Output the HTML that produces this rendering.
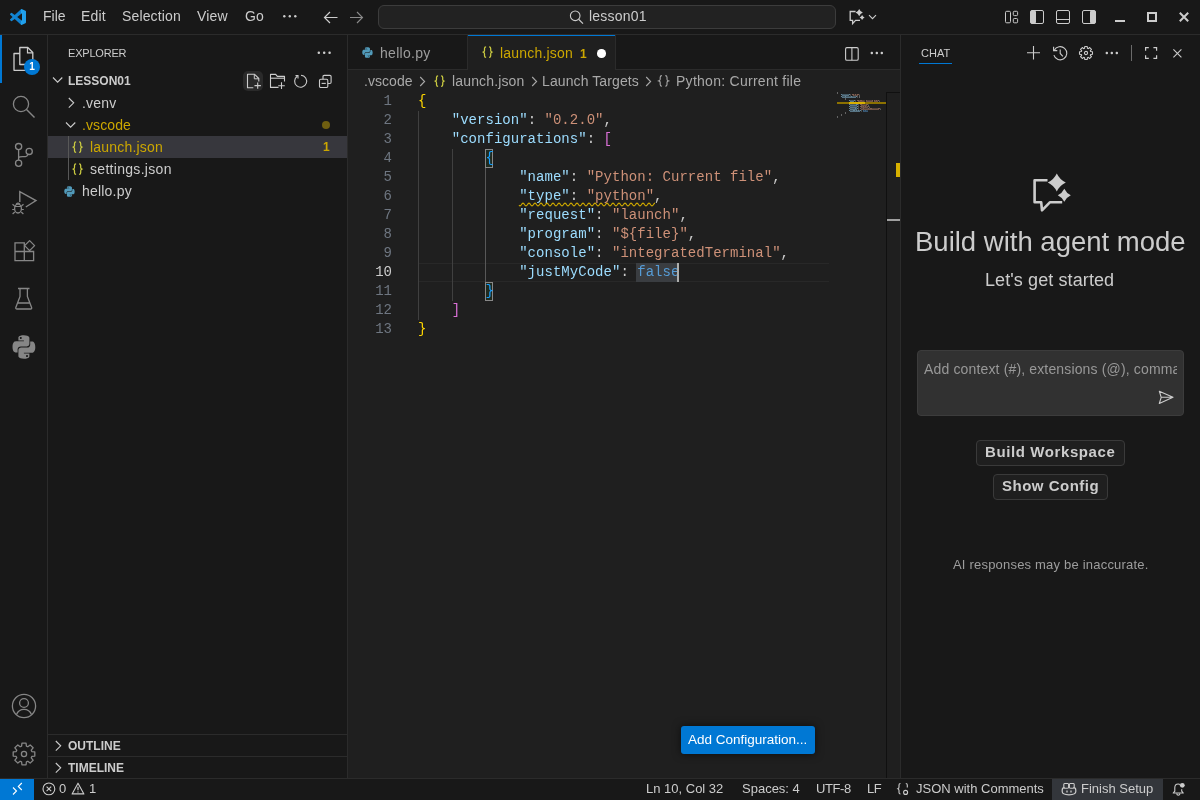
<!DOCTYPE html>
<html><head><meta charset="utf-8">
<style>
*{box-sizing:border-box;margin:0;padding:0}
html,body{width:1200px;height:800px;overflow:hidden;background:#181818;}
body{will-change:transform;font-family:"Liberation Sans",sans-serif;color:#cccccc;font-size:13px}
.a{position:absolute}
.t{position:absolute;white-space:nowrap;line-height:1}
svg{position:absolute;overflow:visible}
.mono{font-family:"Liberation Mono",monospace}
</style></head><body>
<!-- TITLE BAR -->
<div class="a" style="left:0;top:0;width:1200px;height:34px;background:#181818"></div>
<div class="a" style="left:0;top:34px;width:1200px;height:1px;background:#2b2b2b"></div>

<!-- logo -->
<svg style="left:10px;top:9px" width="16" height="16" viewBox="0 0 100 100"><defs><linearGradient id="lg" x1="0" x2="1" y1="0" y2="0"><stop offset="0" stop-color="#1589d6"/><stop offset="0.66" stop-color="#0d7fcf"/><stop offset="0.67" stop-color="#22a3ee"/><stop offset="1" stop-color="#1f9ce8"/></linearGradient></defs><path fill="url(#lg)" d="M96.46 10.8L75.86.87a6.23 6.23 0 0 0-7.1 1.2L29.35 38.04 12.19 25.01a4.160 4.160 0 0 0-5.32.24l-5.5 5a4.16 4.16 0 0 0 0 6.16L16.26 50 1.37 63.59a4.16 4.16 0 0 0 0 6.16l5.5 5a4.16 4.16 0 0 0 5.32.24l17.16-13.03 39.41 35.97a6.23 6.23 0 0 0 7.1 1.2l20.6-9.92a6.24 6.24 0 0 0 3.54-5.63V16.43a6.24 6.24 0 0 0-3.54-5.63zM75.01 72.7L45.110 50l29.9-22.7z"/></svg>
<div class="t" style="left:43px;top:9px;font-size:14px;letter-spacing:0px">File</div>
<div class="t" style="left:81px;top:9px;font-size:14px;letter-spacing:0.2px">Edit</div>
<div class="t" style="left:122px;top:9px;font-size:14px;letter-spacing:0.15px">Selection</div>
<div class="t" style="left:197px;top:9px;font-size:14px;letter-spacing:0.2px">View</div>
<div class="t" style="left:245px;top:9px;font-size:14px;letter-spacing:0px">Go</div>
<svg style="left:283px;top:15px" width="14" height="3"><circle cx="1.3" cy="1.3" r="1.2" fill="#ccc"/><circle cx="6.8" cy="1.3" r="1.2" fill="#ccc"/><circle cx="12.3" cy="1.3" r="1.2" fill="#ccc"/></svg>
<!-- nav arrows -->
<svg style="left:323px;top:11px" width="16" height="14" viewBox="0 0 16 14"><path d="M7 1L1.5 6.5L7 12M1.5 6.5H14.5" stroke="#cccccc" stroke-width="1.2" fill="none"/></svg>
<svg style="left:349px;top:11px" width="16" height="14" viewBox="0 0 16 14"><path d="M8 1L13.5 6.5L8 12M13.5 6.5H1" stroke="#8b8b8b" stroke-width="1.1" fill="none"/></svg>
<!-- search -->
<div class="a" style="left:378px;top:5px;width:458px;height:24px;background:#222222;border:1px solid #3c3c3c;border-radius:6px"></div>
<svg style="left:569px;top:10px" width="15" height="15" viewBox="0 0 15 15"><circle cx="6.2" cy="5.8" r="4.8" stroke="#cccccc" stroke-width="1.1" fill="none"/><path d="M9.6 9.3L14 13.6" stroke="#cccccc" stroke-width="1.2"/></svg>
<div class="t" style="left:589px;top:9px;font-size:14px;letter-spacing:0.2px">lesson01</div>
<!-- copilot -->
<svg style="left:849px;top:9px" width="17" height="16" viewBox="0 0 17 16"><path d="M6.6 2.5H1.2V11.4H3.6V14.6L6.6 11.4H11" stroke="#cccccc" stroke-width="1.3" fill="none" stroke-linejoin="miter"/><path d="M10.2 0.0Q11.2 2.6 13.799999999999999 3.6Q11.2 4.6 10.2 7.2Q9.2 4.6 6.6 3.6Q9.2 2.6 10.2 0.0Z" fill="#cccccc"/><path d="M13.1 6.1Q13.85 7.85 15.6 8.6Q13.85 9.35 13.1 11.1Q12.35 9.35 10.6 8.6Q12.35 7.85 13.1 6.1Z" fill="#cccccc"/></svg>
<svg style="left:868px;top:14px" width="9" height="6" viewBox="0 0 9 6"><path d="M1 1.2L4.5 4.7L8 1.2" stroke="#cccccc" stroke-width="1.1" fill="none"/></svg>
<!-- layout icons -->
<svg style="left:1004px;top:10px" width="15" height="14" viewBox="0 0 15 14"><rect x="1.5" y="1.3" width="5" height="11.5" rx="1.2" stroke="#cccccc" fill="none"/><rect x="9.3" y="1.3" width="4.3" height="4.3" rx="1" stroke="#cccccc" fill="none"/><rect x="9.3" y="8.5" width="4.3" height="4.3" rx="1" stroke="#cccccc" fill="none"/></svg>
<svg style="left:1030px;top:10px" width="14" height="14" viewBox="0 0 14 14"><rect x="0.5" y="0.5" width="13" height="13" rx="1.5" stroke="#cccccc" fill="none"/><rect x="0.5" y="0.5" width="5.5" height="13" rx="1.5" fill="#cccccc"/></svg>
<svg style="left:1056px;top:10px" width="14" height="14" viewBox="0 0 14 14"><rect x="0.5" y="0.5" width="13" height="13" rx="1.5" stroke="#cccccc" fill="none"/><path d="M0.5 9.5H13.5" stroke="#cccccc"/></svg>
<svg style="left:1082px;top:10px" width="14" height="14" viewBox="0 0 14 14"><rect x="0.5" y="0.5" width="13" height="13" rx="1.5" stroke="#cccccc" fill="none"/><rect x="8" y="0.5" width="5.5" height="13" rx="1.5" fill="#cccccc"/></svg>
<!-- window controls -->
<div class="a" style="left:1115px;top:20px;width:10px;height:2px;background:#cccccc"></div>
<div class="a" style="left:1147px;top:12px;width:10px;height:10px;border:2px solid #cccccc"></div>
<svg style="left:1179px;top:12px" width="10" height="10" viewBox="0 0 10 10"><path d="M0.8 0.8L9.2 9.2M9.2 0.8L0.8 9.2" stroke="#cccccc" stroke-width="2"/></svg>
<!-- ACTIVITY BAR -->
<div class="a" style="left:47px;top:35px;width:1px;height:743px;background:#2b2b2b"></div>

<div class="a" style="left:0;top:35px;width:2px;height:48px;background:#0078d4"></div>
<!-- explorer icon -->
<svg style="left:12px;top:46px" width="24" height="26" viewBox="0 0 24 26"><path d="M7.8 1.5H15.8L20.8 6.5V18.5H7.8Z" stroke="#cccccc" stroke-width="1.3" fill="none" stroke-linejoin="round"/><path d="M15.5 1.5V6.8H20.8" stroke="#cccccc" stroke-width="1.2" fill="none"/><path d="M7.8 7.5H2V24.3H15.5V18.5" stroke="#cccccc" stroke-width="1.3" fill="none" stroke-linejoin="round"/></svg>
<div class="a" style="left:24px;top:59px;width:16px;height:16px;border-radius:50%;background:#0078d4"></div>
<div class="t" style="left:24px;top:62px;width:16px;text-align:center;font-size:10px;font-weight:bold;color:#fff">1</div>
<!-- search -->
<svg style="left:10px;top:93px" width="28" height="28" viewBox="0 0 28 28"><circle cx="11" cy="11" r="7.6" stroke="#868686" stroke-width="1.3" fill="none"/><path d="M16.5 16.5L24.5 24.5" stroke="#868686" stroke-width="1.4"/></svg>
<!-- scm -->
<svg style="left:10px;top:140px" width="28" height="28" viewBox="0 0 28 28"><circle cx="8.6" cy="6.6" r="3.1" stroke="#868686" stroke-width="1.3" fill="none"/><circle cx="8.6" cy="23.2" r="3.1" stroke="#868686" stroke-width="1.3" fill="none"/><circle cx="19.2" cy="11.4" r="3.1" stroke="#868686" stroke-width="1.3" fill="none"/><path d="M8.6 9.7V20.1M8.6 17.6Q9.5 16.6 12.5 16.6H15.5Q17 16.6 18.2 14.3" stroke="#868686" stroke-width="1.3" fill="none"/></svg>
<!-- debug -->
<svg style="left:10px;top:188px" width="28" height="28" viewBox="0 0 28 28"><path d="M9.8 14V3.6L26 12.6L15.8 19" stroke="#868686" stroke-width="1.4" fill="none" stroke-linejoin="miter"/><ellipse cx="8" cy="20.5" rx="3.4" ry="4.5" stroke="#868686" stroke-width="1.3" fill="none"/><path d="M4.6 18.5H11.4M2.5 16.3L4.6 18M13.5 16.3L11.4 18M2.2 21.5H4.6M11.4 21.5H13.8M2.6 26L4.8 24M13.4 26L11.2 24M6.2 16.2Q8 14.2 9.8 16.2" stroke="#868686" stroke-width="1.2" fill="none"/></svg>
<!-- extensions -->
<svg style="left:10px;top:237px" width="28" height="28" viewBox="0 0 28 28"><path d="M5 5.8H14.3V23.6H5ZM5 14.5H23.6V23.6H14.3V14.5" stroke="#868686" stroke-width="1.3" fill="none"/><path d="M19.6 3.6L24.6 8.6L19.6 13.6L14.6 8.6Z" stroke="#868686" stroke-width="1.3" fill="none" stroke-linejoin="round"/></svg>
<!-- testing -->
<svg style="left:10px;top:285px" width="28" height="28" viewBox="0 0 28 28"><path d="M8 3.5H19.5M10 3.5V11.5L5.8 22.5Q5.5 24 7 24H20.6Q22 24 21.6 22.5L17.4 11.5V3.5M8 18H19.5" stroke="#868686" stroke-width="1.3" fill="none" stroke-linejoin="round"/></svg>
<!-- python -->
<svg style="left:12px;top:335px" width="24" height="24" viewBox="0 0 24 24"><path fill="#868686" d="M11.8 0.3C6 0.3 6.4 2.8 6.4 2.8V5.4H11.9V6.2H4.2S0.5 5.8 0.5 11.7C0.5 17.6 3.7 17.4 3.7 17.4H5.6V14.6S5.5 11.4 8.8 11.4H14.3S17.4 11.5 17.4 8.4V3.3S17.9 0.3 11.8 0.3ZM8.8 2C9.3 2 9.8 2.4 9.8 3C9.8 3.5 9.3 4 8.8 4C8.2 4 7.8 3.5 7.8 3C7.8 2.4 8.2 2 8.8 2Z"/><path fill="#868686" d="M12 23.7C17.8 23.7 17.4 21.2 17.4 21.2V18.6H11.9V17.8H19.6S23.3 18.2 23.3 12.3C23.3 6.4 20.1 6.6 20.1 6.6H18.2V9.4S18.3 12.6 15 12.6H9.5S6.4 12.5 6.4 15.6V20.7S5.9 23.7 12 23.7ZM15 22C14.5 22 14 21.6 14 21C14 20.5 14.5 20 15 20C15.6 20 16 20.5 16 21C16 21.6 15.6 22 15 22Z"/></svg>
<!-- account -->
<svg style="left:10px;top:692px" width="28" height="28" viewBox="0 0 28 28"><circle cx="14" cy="14" r="11.6" stroke="#868686" stroke-width="1.3" fill="none"/><circle cx="14" cy="11" r="4.4" stroke="#868686" stroke-width="1.3" fill="none"/><path d="M6.5 22.5Q8.5 17.4 14 17.4Q19.5 17.4 21.5 22.5" stroke="#868686" stroke-width="1.3" fill="none"/></svg>
<!-- gear -->
<svg style="left:10px;top:740px" width="28" height="28" viewBox="0 0 28 28"><path id="gear" d="M11.58 6.17 L11.92 3.20 L16.08 3.20 L16.42 6.17 L17.83 6.75 L20.17 4.89 L23.11 7.83 L21.25 10.17 L21.83 11.58 L24.80 11.92 L24.80 16.08 L21.83 16.42 L21.25 17.83 L23.11 20.17 L20.17 23.11 L17.83 21.25 L16.42 21.83 L16.08 24.80 L11.92 24.80 L11.58 21.83 L10.17 21.25 L7.83 23.11 L4.89 20.17 L6.75 17.83 L6.17 16.42 L3.20 16.08 L3.20 11.92 L6.17 11.58 L6.75 10.17 L4.89 7.83 L7.83 4.89 L10.17 6.75Z" stroke="#868686" stroke-width="1.3" fill="none" stroke-linejoin="round"/><circle cx="14" cy="14" r="2.6" stroke="#868686" stroke-width="1.3" fill="none"/></svg>
<!-- SIDEBAR -->
<div class="a" style="left:347px;top:35px;width:1px;height:743px;background:#2b2b2b"></div>

<div class="t" style="left:68px;top:48px;font-size:11px;letter-spacing:-0.2px;color:#cccccc">EXPLORER</div>
<svg style="left:317px;top:51px" width="14" height="4"><rect x="0.6" y="0.6" width="2.4" height="2.4" rx="1" fill="#cccccc"/><rect x="6" y="0.6" width="2.4" height="2.4" rx="1" fill="#cccccc"/><rect x="11.4" y="0.6" width="2.4" height="2.4" rx="1" fill="#cccccc"/></svg>
<!-- LESSON01 row -->
<svg style="left:52px;top:76px" width="12" height="8" viewBox="0 0 12 8"><path d="M1 1.5L5.6 6.2L10.3 1.5" stroke="#cccccc" stroke-width="1.1" fill="none"/></svg>
<div class="t" style="left:68px;top:75px;font-size:12px;font-weight:bold;color:#cccccc">LESSON01</div>
<div class="a" style="left:243px;top:71px;width:20px;height:20px;border-radius:5px;background:#2a2a2a"></div>
<svg style="left:245px;top:72px" width="18" height="18" viewBox="0 0 18 18"><path d="M8.3 15.8H2.5V2.3H9.6L13.8 6.5V9.5" stroke="#cccccc" stroke-width="1.1" fill="none" stroke-linejoin="round"/><path d="M9.3 2.3V6.8H13.8" stroke="#cccccc" stroke-width="1" fill="none"/><path d="M12.7 10.5V16.8M9.5 13.6H15.9" stroke="#cccccc" stroke-width="1.1"/></svg>
<svg style="left:269px;top:72px" width="18" height="18" viewBox="0 0 18 18"><path d="M9.5 15.4H1.5V2.4H6.7L8.3 4.4H15.5V9.5" stroke="#cccccc" stroke-width="1.1" fill="none" stroke-linejoin="round"/><path d="M1.5 6.2H15.5" stroke="#cccccc" stroke-width="1.1"/><path d="M12.5 10.3V17M9.2 13.7H15.8" stroke="#cccccc" stroke-width="1.1"/></svg>
<svg style="left:293px;top:73px" width="16" height="16" viewBox="0 0 16 16"><path d="M4.3 3.2A6 6 0 1 0 8 2.2" stroke="#cccccc" stroke-width="1.1" fill="none"/><path d="M2.5 2.6H5V5.4" stroke="#cccccc" stroke-width="1.1" fill="none"/></svg>
<svg style="left:318px;top:74px" width="15" height="15" viewBox="0 0 15 15"><rect x="1.5" y="5.2" width="8.3" height="8.3" rx="1.2" stroke="#cccccc" stroke-width="1.1" fill="none"/><path d="M5 5.2V2.6Q5 1.4 6.2 1.4H11.9Q13.1 1.4 13.1 2.6V8.3Q13.1 9.5 11.9 9.5H9.8" stroke="#cccccc" stroke-width="1.1" fill="none"/><path d="M3.6 9.4H7.8" stroke="#cccccc" stroke-width="1.1"/></svg>
<!-- .venv -->
<svg style="left:67px;top:97px" width="9" height="12" viewBox="0 0 9 12"><path d="M1.8 1L6.7 5.8L1.8 10.6" stroke="#cccccc" stroke-width="1.1" fill="none"/></svg>
<div class="t" style="left:82px;top:96px;font-size:14px;color:#cccccc;letter-spacing:0.2px">.venv</div>
<!-- .vscode -->
<svg style="left:65px;top:121px" width="12" height="9" viewBox="0 0 12 9"><path d="M1 1.5L5.6 6.2L10.3 1.5" stroke="#cccccc" stroke-width="1.1" fill="none"/></svg>
<div class="t" style="left:82px;top:118px;font-size:14px;color:#cca700;letter-spacing:0.1px">.vscode</div>
<div class="a" style="left:322px;top:121px;width:8px;height:8px;border-radius:50%;background:#6f5e10"></div>
<!-- launch.json selected -->
<div class="a" style="left:48px;top:136px;width:299px;height:22px;background:#37373d"></div>
<div class="a" style="left:68px;top:136px;width:1px;height:44px;background:#585858"></div>
<svg style="left:72px;top:141px" width="12" height="12" viewBox="0 0 12 12"><path d="M4.1 0.9Q2.5 0.9 2.5 2.5V4.5Q2.5 5.6 1.4 6.1Q2.5 6.6 2.5 7.7V9.7Q2.5 11.3 4.1 11.3M7.1 0.9Q8.7 0.9 8.7 2.5V4.5Q8.7 5.6 9.8 6.1Q8.7 6.6 8.7 7.7V9.7Q8.7 11.3 7.1 11.3" stroke="#cbcb41" stroke-width="1.25" fill="none"/></svg>
<div class="t" style="left:90px;top:140px;font-size:14px;color:#cca700;letter-spacing:0.2px">launch.json</div>
<div class="t" style="left:323px;top:141px;font-size:12px;font-weight:bold;color:#cca700">1</div>
<!-- settings.json -->
<svg style="left:72px;top:163px" width="12" height="12" viewBox="0 0 12 12"><path d="M4.1 0.9Q2.5 0.9 2.5 2.5V4.5Q2.5 5.6 1.4 6.1Q2.5 6.6 2.5 7.7V9.7Q2.5 11.3 4.1 11.3M7.1 0.9Q8.7 0.9 8.7 2.5V4.5Q8.7 5.6 9.8 6.1Q8.7 6.6 8.7 7.7V9.7Q8.7 11.3 7.1 11.3" stroke="#cbcb41" stroke-width="1.25" fill="none"/></svg>
<div class="t" style="left:90px;top:162px;font-size:14px;color:#cccccc;letter-spacing:0.3px">settings.json</div>
<!-- hello.py -->
<svg style="left:64px;top:186px" width="11" height="11" viewBox="0 0 24 24"><path fill="#519aba" d="M11.8 0.3C6 0.3 6.4 2.8 6.4 2.8V5.4H11.9V6.2H4.2S0.5 5.8 0.5 11.7C0.5 17.6 3.7 17.4 3.7 17.4H5.6V14.6S5.5 11.4 8.8 11.4H14.3S17.4 11.5 17.4 8.4V3.3S17.9 0.3 11.8 0.3ZM8.8 2C9.3 2 9.8 2.4 9.8 3C9.8 3.5 9.3 4 8.8 4C8.2 4 7.8 3.5 7.8 3C7.8 2.4 8.2 2 8.8 2Z"/><path fill="#519aba" d="M12 23.7C17.8 23.7 17.4 21.2 17.4 21.2V18.6H11.9V17.8H19.6S23.3 18.2 23.3 12.3C23.3 6.4 20.1 6.6 20.1 6.6H18.2V9.4S18.3 12.6 15 12.6H9.5S6.4 12.5 6.4 15.6V20.7S5.9 23.7 12 23.7ZM15 22C14.5 22 14 21.6 14 21C14 20.5 14.5 20 15 20C15.6 20 16 20.5 16 21C16 21.6 15.6 22 15 22Z"/></svg>
<div class="t" style="left:82px;top:184px;font-size:14px;color:#cccccc;letter-spacing:0.2px">hello.py</div>
<!-- OUTLINE / TIMELINE -->
<div class="a" style="left:48px;top:734px;width:299px;height:1px;background:#2b2b2b"></div>
<svg style="left:54px;top:740px" width="9" height="12" viewBox="0 0 9 12"><path d="M1.8 1L6.7 5.8L1.8 10.6" stroke="#cccccc" stroke-width="1.1" fill="none"/></svg>
<div class="t" style="left:68px;top:740px;font-size:12px;font-weight:bold;color:#cccccc">OUTLINE</div>
<div class="a" style="left:48px;top:756px;width:299px;height:1px;background:#2b2b2b"></div>
<svg style="left:54px;top:762px" width="9" height="12" viewBox="0 0 9 12"><path d="M1.8 1L6.7 5.8L1.8 10.6" stroke="#cccccc" stroke-width="1.1" fill="none"/></svg>
<div class="t" style="left:68px;top:762px;font-size:12px;font-weight:bold;color:#cccccc">TIMELINE</div>
<!-- EDITOR -->
<div class="a" style="left:348px;top:35px;width:552px;height:743px;background:#1f1f1f"></div>

<!-- tabs -->
<div class="a" style="left:348px;top:35px;width:552px;height:35px;background:#181818"></div>
<div class="a" style="left:348px;top:69px;width:552px;height:1px;background:#2b2b2b"></div>
<div class="a" style="left:467px;top:35px;width:1px;height:34px;background:#2b2b2b"></div>
<svg style="left:362px;top:47px" width="11" height="11" viewBox="0 0 24 24"><path fill="#519aba" d="M11.8 0.3C6 0.3 6.4 2.8 6.4 2.8V5.4H11.9V6.2H4.2S0.5 5.8 0.5 11.7C0.5 17.6 3.7 17.4 3.7 17.4H5.6V14.6S5.5 11.4 8.8 11.4H14.3S17.4 11.5 17.4 8.4V3.3S17.9 0.3 11.8 0.3ZM8.8 2C9.3 2 9.8 2.4 9.8 3C9.8 3.5 9.3 4 8.8 4C8.2 4 7.8 3.5 7.8 3C7.8 2.4 8.2 2 8.8 2Z"/><path fill="#519aba" d="M12 23.7C17.8 23.7 17.4 21.2 17.4 21.2V18.6H11.9V17.8H19.6S23.3 18.2 23.3 12.3C23.3 6.4 20.1 6.6 20.1 6.6H18.2V9.4S18.3 12.6 15 12.6H9.5S6.4 12.5 6.4 15.6V20.7S5.9 23.7 12 23.7ZM15 22C14.5 22 14 21.6 14 21C14 20.5 14.5 20 15 20C15.6 20 16 20.5 16 21C16 21.6 15.6 22 15 22Z"/></svg>
<div class="t" style="left:380px;top:46px;font-size:14px;color:#9d9d9d;letter-spacing:0.3px">hello.py</div>
<div class="a" style="left:468px;top:35px;width:147px;height:35px;background:#1f1f1f;border-top:1px solid #0078d4"></div>
<div class="a" style="left:615px;top:35px;width:1px;height:34px;background:#2b2b2b"></div>
<svg style="left:482px;top:46px" width="12" height="12" viewBox="0 0 12 12"><path d="M4.1 0.9Q2.5 0.9 2.5 2.5V4.5Q2.5 5.6 1.4 6.1Q2.5 6.6 2.5 7.7V9.7Q2.5 11.3 4.1 11.3M7.1 0.9Q8.7 0.9 8.7 2.5V4.5Q8.7 5.6 9.8 6.1Q8.7 6.6 8.7 7.7V9.7Q8.7 11.3 7.1 11.3" stroke="#cbcb41" stroke-width="1.25" fill="none"/></svg>
<div class="t" style="left:500px;top:46px;font-size:14px;color:#cca700;letter-spacing:0.2px">launch.json</div>
<div class="t" style="left:580px;top:48px;font-size:12px;font-weight:bold;color:#cca700">1</div>
<div class="a" style="left:597px;top:49px;width:8.5px;height:8.5px;border-radius:50%;background:#ffffff"></div>
<!-- split / more -->
<svg style="left:845px;top:47px" width="14" height="14" viewBox="0 0 14 14"><rect x="0.6" y="0.6" width="12.6" height="12.6" rx="1.3" stroke="#cccccc" stroke-width="1.1" fill="none"/><path d="M6.9 0.6V13.2" stroke="#cccccc" stroke-width="1.1"/></svg>
<svg style="left:870px;top:51px" width="14" height="4"><rect x="0.6" y="0.8" width="2.4" height="2.4" rx="1" fill="#cccccc"/><rect x="5.6" y="0.8" width="2.4" height="2.4" rx="1" fill="#cccccc"/><rect x="10.6" y="0.8" width="2.4" height="2.4" rx="1" fill="#cccccc"/></svg>
<!-- breadcrumbs -->
<div class="t" style="left:364px;top:74px;font-size:14px;color:#a9a9a9;letter-spacing:0.05px">.vscode</div>
<svg style="left:419px;top:76px" width="8" height="11" viewBox="0 0 8 11"><path d="M1.2 1L5.6 5.5L1.2 10" stroke="#a9a9a9" stroke-width="1.1" fill="none"/></svg>
<svg style="left:434px;top:75px" width="12" height="12" viewBox="0 0 12 12"><path d="M4.1 0.9Q2.5 0.9 2.5 2.5V4.5Q2.5 5.6 1.4 6.1Q2.5 6.6 2.5 7.7V9.7Q2.5 11.3 4.1 11.3M7.1 0.9Q8.7 0.9 8.7 2.5V4.5Q8.7 5.6 9.8 6.1Q8.7 6.6 8.7 7.7V9.7Q8.7 11.3 7.1 11.3" stroke="#cbcb41" stroke-width="1.25" fill="none"/></svg>
<div class="t" style="left:452px;top:74px;font-size:14px;color:#a9a9a9;letter-spacing:0.15px">launch.json</div>
<svg style="left:531px;top:76px" width="8" height="11" viewBox="0 0 8 11"><path d="M1.2 1L5.6 5.5L1.2 10" stroke="#a9a9a9" stroke-width="1.1" fill="none"/></svg>
<div class="t" style="left:542px;top:74px;font-size:14px;color:#a9a9a9;letter-spacing:0.1px">Launch Targets</div>
<svg style="left:645px;top:76px" width="8" height="11" viewBox="0 0 8 11"><path d="M1.2 1L5.6 5.5L1.2 10" stroke="#a9a9a9" stroke-width="1.1" fill="none"/></svg>
<svg style="left:658px;top:75px" width="12" height="12" viewBox="0 0 12 12"><path d="M3.9 0.6Q2.2 0.6 2.2 2.2V4.3Q2.2 5.5 0.9 5.9Q2.2 6.3 2.2 7.5V9.6Q2.2 11.3 3.9 11.3M7.3 0.6Q9 0.6 9 2.2V4.3Q9 5.5 10.3 5.9Q9 6.3 9 7.5V9.6Q9 11.3 7.3 11.3" stroke="#a9a9a9" stroke-width="1.1" fill="none"/></svg>
<div class="t" style="left:676px;top:74px;font-size:14px;color:#a9a9a9;letter-spacing:0.27px">Python: Current file</div>
<div class="a" style="left:418px;top:263px;width:411px;height:19px;border:1px solid #282828;border-left:none;border-right:none"></div>
<div class="a" style="left:418px;top:111px;width:1px;height:209px;background:#404040"></div>
<div class="a" style="left:452px;top:149px;width:1px;height:152px;background:#404040"></div>
<div class="a" style="left:485px;top:168px;width:1px;height:114px;background:#585858"></div>
<div class="a" style="left:636px;top:263px;width:42px;height:19px;background:#3a3d41"></div>
<div class="a" style="left:485px;top:149px;width:8px;height:19px;border:1px solid #888888;background:#1f2a1f"></div>
<div class="a" style="left:485px;top:282px;width:8px;height:19px;border:1px solid #888888;background:#1f2a1f"></div>
<div class="t mono" style="left:348px;top:92px;width:44px;text-align:right;font-size:14px;line-height:19px;color:#6e7681">1</div>
<div class="t mono" style="left:418px;top:92px;font-size:14px;line-height:19px;white-space:pre;letter-spacing:0.03px"><span style="color:#ffd700">{</span></div>
<div class="t mono" style="left:348px;top:111px;width:44px;text-align:right;font-size:14px;line-height:19px;color:#6e7681">2</div>
<div class="t mono" style="left:418px;top:111px;font-size:14px;line-height:19px;white-space:pre;letter-spacing:0.03px">    <span style="color:#9cdcfe">"version"</span><span style="color:#cccccc">: </span><span style="color:#ce9178">"0.2.0"</span><span style="color:#cccccc">,</span></div>
<div class="t mono" style="left:348px;top:130px;width:44px;text-align:right;font-size:14px;line-height:19px;color:#6e7681">3</div>
<div class="t mono" style="left:418px;top:130px;font-size:14px;line-height:19px;white-space:pre;letter-spacing:0.03px">    <span style="color:#9cdcfe">"configurations"</span><span style="color:#cccccc">: </span><span style="color:#da70d6">[</span></div>
<div class="t mono" style="left:348px;top:149px;width:44px;text-align:right;font-size:14px;line-height:19px;color:#6e7681">4</div>
<div class="t mono" style="left:418px;top:149px;font-size:14px;line-height:19px;white-space:pre;letter-spacing:0.03px">        <span style="color:#179fff">{</span></div>
<div class="t mono" style="left:348px;top:168px;width:44px;text-align:right;font-size:14px;line-height:19px;color:#6e7681">5</div>
<div class="t mono" style="left:418px;top:168px;font-size:14px;line-height:19px;white-space:pre;letter-spacing:0.03px">            <span style="color:#9cdcfe">"name"</span><span style="color:#cccccc">: </span><span style="color:#ce9178">"Python: Current file"</span><span style="color:#cccccc">,</span></div>
<div class="t mono" style="left:348px;top:187px;width:44px;text-align:right;font-size:14px;line-height:19px;color:#6e7681">6</div>
<div class="t mono" style="left:418px;top:187px;font-size:14px;line-height:19px;white-space:pre;letter-spacing:0.03px">            <span style="color:#9cdcfe">"type"</span><span style="color:#cccccc">: </span><span style="color:#ce9178">"python"</span><span style="color:#cccccc">,</span></div>
<div class="t mono" style="left:348px;top:206px;width:44px;text-align:right;font-size:14px;line-height:19px;color:#6e7681">7</div>
<div class="t mono" style="left:418px;top:206px;font-size:14px;line-height:19px;white-space:pre;letter-spacing:0.03px">            <span style="color:#9cdcfe">"request"</span><span style="color:#cccccc">: </span><span style="color:#ce9178">"launch"</span><span style="color:#cccccc">,</span></div>
<div class="t mono" style="left:348px;top:225px;width:44px;text-align:right;font-size:14px;line-height:19px;color:#6e7681">8</div>
<div class="t mono" style="left:418px;top:225px;font-size:14px;line-height:19px;white-space:pre;letter-spacing:0.03px">            <span style="color:#9cdcfe">"program"</span><span style="color:#cccccc">: </span><span style="color:#ce9178">"${file}"</span><span style="color:#cccccc">,</span></div>
<div class="t mono" style="left:348px;top:244px;width:44px;text-align:right;font-size:14px;line-height:19px;color:#6e7681">9</div>
<div class="t mono" style="left:418px;top:244px;font-size:14px;line-height:19px;white-space:pre;letter-spacing:0.03px">            <span style="color:#9cdcfe">"console"</span><span style="color:#cccccc">: </span><span style="color:#ce9178">"integratedTerminal"</span><span style="color:#cccccc">,</span></div>
<div class="t mono" style="left:348px;top:263px;width:44px;text-align:right;font-size:14px;line-height:19px;color:#cccccc">10</div>
<div class="t mono" style="left:418px;top:263px;font-size:14px;line-height:19px;white-space:pre;letter-spacing:0.03px">            <span style="color:#9cdcfe">"justMyCode"</span><span style="color:#cccccc">: </span><span style="color:#569cd6">false</span></div>
<div class="t mono" style="left:348px;top:282px;width:44px;text-align:right;font-size:14px;line-height:19px;color:#6e7681">11</div>
<div class="t mono" style="left:418px;top:282px;font-size:14px;line-height:19px;white-space:pre;letter-spacing:0.03px">        <span style="color:#179fff">}</span></div>
<div class="t mono" style="left:348px;top:301px;width:44px;text-align:right;font-size:14px;line-height:19px;color:#6e7681">12</div>
<div class="t mono" style="left:418px;top:301px;font-size:14px;line-height:19px;white-space:pre;letter-spacing:0.03px">    <span style="color:#da70d6">]</span></div>
<div class="t mono" style="left:348px;top:320px;width:44px;text-align:right;font-size:14px;line-height:19px;color:#6e7681">13</div>
<div class="t mono" style="left:418px;top:320px;font-size:14px;line-height:19px;white-space:pre;letter-spacing:0.03px"><span style="color:#ffd700">}</span></div>
<svg style="left:519px;top:202px" width="136" height="6" viewBox="0 0 136 6"><path d="M0.00 3.15 L0.25 3.42 L0.50 3.63 L0.75 3.76 L1.00 3.80 L1.25 3.76 L1.50 3.63 L1.75 3.42 L2.00 3.15 L2.25 2.84 L2.50 2.50 L2.75 2.16 L3.00 1.85 L3.25 1.58 L3.50 1.37 L3.75 1.24 L4.00 1.20 L4.25 1.24 L4.50 1.37 L4.75 1.58 L5.00 1.85 L5.25 2.16 L5.50 2.50 L5.75 2.84 L6.00 3.15 L6.25 3.42 L6.50 3.63 L6.75 3.76 L7.00 3.80 L7.25 3.76 L7.50 3.63 L7.75 3.42 L8.00 3.15 L8.25 2.84 L8.50 2.50 L8.75 2.16 L9.00 1.85 L9.25 1.58 L9.50 1.37 L9.75 1.24 L10.00 1.20 L10.25 1.24 L10.50 1.37 L10.75 1.58 L11.00 1.85 L11.25 2.16 L11.50 2.50 L11.75 2.84 L12.00 3.15 L12.25 3.42 L12.50 3.63 L12.75 3.76 L13.00 3.80 L13.25 3.76 L13.50 3.63 L13.75 3.42 L14.00 3.15 L14.25 2.84 L14.50 2.50 L14.75 2.16 L15.00 1.85 L15.25 1.58 L15.50 1.37 L15.75 1.24 L16.00 1.20 L16.25 1.24 L16.50 1.37 L16.75 1.58 L17.00 1.85 L17.25 2.16 L17.50 2.50 L17.75 2.84 L18.00 3.15 L18.25 3.42 L18.50 3.63 L18.75 3.76 L19.00 3.80 L19.25 3.76 L19.50 3.63 L19.75 3.42 L20.00 3.15 L20.25 2.84 L20.50 2.50 L20.75 2.16 L21.00 1.85 L21.25 1.58 L21.50 1.37 L21.75 1.24 L22.00 1.20 L22.25 1.24 L22.50 1.37 L22.75 1.58 L23.00 1.85 L23.25 2.16 L23.50 2.50 L23.75 2.84 L24.00 3.15 L24.25 3.42 L24.50 3.63 L24.75 3.76 L25.00 3.80 L25.25 3.76 L25.50 3.63 L25.75 3.42 L26.00 3.15 L26.25 2.84 L26.50 2.50 L26.75 2.16 L27.00 1.85 L27.25 1.58 L27.50 1.37 L27.75 1.24 L28.00 1.20 L28.25 1.24 L28.50 1.37 L28.75 1.58 L29.00 1.85 L29.25 2.16 L29.50 2.50 L29.75 2.84 L30.00 3.15 L30.25 3.42 L30.50 3.63 L30.75 3.76 L31.00 3.80 L31.25 3.76 L31.50 3.63 L31.75 3.42 L32.00 3.15 L32.25 2.84 L32.50 2.50 L32.75 2.16 L33.00 1.85 L33.25 1.58 L33.50 1.37 L33.75 1.24 L34.00 1.20 L34.25 1.24 L34.50 1.37 L34.75 1.58 L35.00 1.85 L35.25 2.16 L35.50 2.50 L35.75 2.84 L36.00 3.15 L36.25 3.42 L36.50 3.63 L36.75 3.76 L37.00 3.80 L37.25 3.76 L37.50 3.63 L37.75 3.42 L38.00 3.15 L38.25 2.84 L38.50 2.50 L38.75 2.16 L39.00 1.85 L39.25 1.58 L39.50 1.37 L39.75 1.24 L40.00 1.20 L40.25 1.24 L40.50 1.37 L40.75 1.58 L41.00 1.85 L41.25 2.16 L41.50 2.50 L41.75 2.84 L42.00 3.15 L42.25 3.42 L42.50 3.63 L42.75 3.76 L43.00 3.80 L43.25 3.76 L43.50 3.63 L43.75 3.42 L44.00 3.15 L44.25 2.84 L44.50 2.50 L44.75 2.16 L45.00 1.85 L45.25 1.58 L45.50 1.37 L45.75 1.24 L46.00 1.20 L46.25 1.24 L46.50 1.37 L46.75 1.58 L47.00 1.85 L47.25 2.16 L47.50 2.50 L47.75 2.84 L48.00 3.15 L48.25 3.42 L48.50 3.63 L48.75 3.76 L49.00 3.80 L49.25 3.76 L49.50 3.63 L49.75 3.42 L50.00 3.15 L50.25 2.84 L50.50 2.50 L50.75 2.16 L51.00 1.85 L51.25 1.58 L51.50 1.37 L51.75 1.24 L52.00 1.20 L52.25 1.24 L52.50 1.37 L52.75 1.58 L53.00 1.85 L53.25 2.16 L53.50 2.50 L53.75 2.84 L54.00 3.15 L54.25 3.42 L54.50 3.63 L54.75 3.76 L55.00 3.80 L55.25 3.76 L55.50 3.63 L55.75 3.42 L56.00 3.15 L56.25 2.84 L56.50 2.50 L56.75 2.16 L57.00 1.85 L57.25 1.58 L57.50 1.37 L57.75 1.24 L58.00 1.20 L58.25 1.24 L58.50 1.37 L58.75 1.58 L59.00 1.85 L59.25 2.16 L59.50 2.50 L59.75 2.84 L60.00 3.15 L60.25 3.42 L60.50 3.63 L60.75 3.76 L61.00 3.80 L61.25 3.76 L61.50 3.63 L61.75 3.42 L62.00 3.15 L62.25 2.84 L62.50 2.50 L62.75 2.16 L63.00 1.85 L63.25 1.58 L63.50 1.37 L63.75 1.24 L64.00 1.20 L64.25 1.24 L64.50 1.37 L64.75 1.58 L65.00 1.85 L65.25 2.16 L65.50 2.50 L65.75 2.84 L66.00 3.15 L66.25 3.42 L66.50 3.63 L66.75 3.76 L67.00 3.80 L67.25 3.76 L67.50 3.63 L67.75 3.42 L68.00 3.15 L68.25 2.84 L68.50 2.50 L68.75 2.16 L69.00 1.85 L69.25 1.58 L69.50 1.37 L69.75 1.24 L70.00 1.20 L70.25 1.24 L70.50 1.37 L70.75 1.58 L71.00 1.85 L71.25 2.16 L71.50 2.50 L71.75 2.84 L72.00 3.15 L72.25 3.42 L72.50 3.63 L72.75 3.76 L73.00 3.80 L73.25 3.76 L73.50 3.63 L73.75 3.42 L74.00 3.15 L74.25 2.84 L74.50 2.50 L74.75 2.16 L75.00 1.85 L75.25 1.58 L75.50 1.37 L75.75 1.24 L76.00 1.20 L76.25 1.24 L76.50 1.37 L76.75 1.58 L77.00 1.85 L77.25 2.16 L77.50 2.50 L77.75 2.84 L78.00 3.15 L78.25 3.42 L78.50 3.63 L78.75 3.76 L79.00 3.80 L79.25 3.76 L79.50 3.63 L79.75 3.42 L80.00 3.15 L80.25 2.84 L80.50 2.50 L80.75 2.16 L81.00 1.85 L81.25 1.58 L81.50 1.37 L81.75 1.24 L82.00 1.20 L82.25 1.24 L82.50 1.37 L82.75 1.58 L83.00 1.85 L83.25 2.16 L83.50 2.50 L83.75 2.84 L84.00 3.15 L84.25 3.42 L84.50 3.63 L84.75 3.76 L85.00 3.80 L85.25 3.76 L85.50 3.63 L85.75 3.42 L86.00 3.15 L86.25 2.84 L86.50 2.50 L86.75 2.16 L87.00 1.85 L87.25 1.58 L87.50 1.37 L87.75 1.24 L88.00 1.20 L88.25 1.24 L88.50 1.37 L88.75 1.58 L89.00 1.85 L89.25 2.16 L89.50 2.50 L89.75 2.84 L90.00 3.15 L90.25 3.42 L90.50 3.63 L90.75 3.76 L91.00 3.80 L91.25 3.76 L91.50 3.63 L91.75 3.42 L92.00 3.15 L92.25 2.84 L92.50 2.50 L92.75 2.16 L93.00 1.85 L93.25 1.58 L93.50 1.37 L93.75 1.24 L94.00 1.20 L94.25 1.24 L94.50 1.37 L94.75 1.58 L95.00 1.85 L95.25 2.16 L95.50 2.50 L95.75 2.84 L96.00 3.15 L96.25 3.42 L96.50 3.63 L96.75 3.76 L97.00 3.80 L97.25 3.76 L97.50 3.63 L97.75 3.42 L98.00 3.15 L98.25 2.84 L98.50 2.50 L98.75 2.16 L99.00 1.85 L99.25 1.58 L99.50 1.37 L99.75 1.24 L100.00 1.20 L100.25 1.24 L100.50 1.37 L100.75 1.58 L101.00 1.85 L101.25 2.16 L101.50 2.50 L101.75 2.84 L102.00 3.15 L102.25 3.42 L102.50 3.63 L102.75 3.76 L103.00 3.80 L103.25 3.76 L103.50 3.63 L103.75 3.42 L104.00 3.15 L104.25 2.84 L104.50 2.50 L104.75 2.16 L105.00 1.85 L105.25 1.58 L105.50 1.37 L105.75 1.24 L106.00 1.20 L106.25 1.24 L106.50 1.37 L106.75 1.58 L107.00 1.85 L107.25 2.16 L107.50 2.50 L107.75 2.84 L108.00 3.15 L108.25 3.42 L108.50 3.63 L108.75 3.76 L109.00 3.80 L109.25 3.76 L109.50 3.63 L109.75 3.42 L110.00 3.15 L110.25 2.84 L110.50 2.50 L110.75 2.16 L111.00 1.85 L111.25 1.58 L111.50 1.37 L111.75 1.24 L112.00 1.20 L112.25 1.24 L112.50 1.37 L112.75 1.58 L113.00 1.85 L113.25 2.16 L113.50 2.50 L113.75 2.84 L114.00 3.15 L114.25 3.42 L114.50 3.63 L114.75 3.76 L115.00 3.80 L115.25 3.76 L115.50 3.63 L115.75 3.42 L116.00 3.15 L116.25 2.84 L116.50 2.50 L116.75 2.16 L117.00 1.85 L117.25 1.58 L117.50 1.37 L117.75 1.24 L118.00 1.20 L118.25 1.24 L118.50 1.37 L118.75 1.58 L119.00 1.85 L119.25 2.16 L119.50 2.50 L119.75 2.84 L120.00 3.15 L120.25 3.42 L120.50 3.63 L120.75 3.76 L121.00 3.80 L121.25 3.76 L121.50 3.63 L121.75 3.42 L122.00 3.15 L122.25 2.84 L122.50 2.50 L122.75 2.16 L123.00 1.85 L123.25 1.58 L123.50 1.37 L123.75 1.24 L124.00 1.20 L124.25 1.24 L124.50 1.37 L124.75 1.58 L125.00 1.85 L125.25 2.16 L125.50 2.50 L125.75 2.84 L126.00 3.15 L126.25 3.42 L126.50 3.63 L126.75 3.76 L127.00 3.80 L127.25 3.76 L127.50 3.63 L127.75 3.42 L128.00 3.15 L128.25 2.84 L128.50 2.50 L128.75 2.16 L129.00 1.85 L129.25 1.58 L129.50 1.37 L129.75 1.24 L130.00 1.20 L130.25 1.24 L130.50 1.37 L130.75 1.58 L131.00 1.85 L131.25 2.16 L131.50 2.50 L131.75 2.84 L132.00 3.15 L132.25 3.42 L132.50 3.63 L132.75 3.76 L133.00 3.80 L133.25 3.76 L133.50 3.63 L133.75 3.42 L134.00 3.15 L134.25 2.84 L134.50 2.50 L134.75 2.16 L135.00 1.85 L135.25 1.58 L135.50 1.37 L135.75 1.24 L136.00 1.20" stroke="#cca700" stroke-width="1.2" fill="none"/></svg>
<div class="a" style="left:677px;top:263px;width:2px;height:19px;background:#aeafad"></div>
<div class="a" style="left:837px;top:92px;width:49px;height:28px">
<div class="a" style="left:0;top:10px;width:49px;height:2px;background:#8c7100"></div>
<div class="a" style="left:12px;top:10px;width:16px;height:2px;background:#d9b000"></div>
<i class="a" style="left:0px;top:0px;width:1px;height:1px;background:rgba(204,204,204,0.40)"></i><i class="a" style="left:0px;top:1px;width:1px;height:1px;background:rgba(204,204,204,0.40)"></i>
<i class="a" style="left:4px;top:2px;width:1px;height:1px;background:rgba(156,220,254,0.55)"></i><i class="a" style="left:5px;top:2px;width:1px;height:1px;background:rgba(156,220,254,0.30)"></i><i class="a" style="left:5px;top:3px;width:1px;height:1px;background:rgba(156,220,254,0.45)"></i><i class="a" style="left:6px;top:2px;width:1px;height:1px;background:rgba(156,220,254,0.30)"></i><i class="a" style="left:6px;top:3px;width:1px;height:1px;background:rgba(156,220,254,0.45)"></i><i class="a" style="left:7px;top:2px;width:1px;height:1px;background:rgba(156,220,254,0.30)"></i><i class="a" style="left:7px;top:3px;width:1px;height:1px;background:rgba(156,220,254,0.45)"></i><i class="a" style="left:8px;top:2px;width:1px;height:1px;background:rgba(156,220,254,0.30)"></i><i class="a" style="left:8px;top:3px;width:1px;height:1px;background:rgba(156,220,254,0.45)"></i><i class="a" style="left:9px;top:2px;width:1px;height:1px;background:rgba(156,220,254,0.30)"></i><i class="a" style="left:9px;top:3px;width:1px;height:1px;background:rgba(156,220,254,0.45)"></i><i class="a" style="left:10px;top:2px;width:1px;height:1px;background:rgba(156,220,254,0.30)"></i><i class="a" style="left:10px;top:3px;width:1px;height:1px;background:rgba(156,220,254,0.45)"></i><i class="a" style="left:11px;top:2px;width:1px;height:1px;background:rgba(156,220,254,0.30)"></i><i class="a" style="left:11px;top:3px;width:1px;height:1px;background:rgba(156,220,254,0.45)"></i><i class="a" style="left:12px;top:2px;width:1px;height:1px;background:rgba(156,220,254,0.55)"></i><i class="a" style="left:13px;top:2px;width:1px;height:1px;background:rgba(204,204,204,0.25)"></i><i class="a" style="left:13px;top:3px;width:1px;height:1px;background:rgba(204,204,204,0.25)"></i><i class="a" style="left:15px;top:2px;width:1px;height:1px;background:rgba(206,145,120,0.55)"></i><i class="a" style="left:16px;top:2px;width:1px;height:1px;background:rgba(206,145,120,0.55)"></i><i class="a" style="left:16px;top:3px;width:1px;height:1px;background:rgba(206,145,120,0.45)"></i><i class="a" style="left:17px;top:2px;width:1px;height:1px;background:rgba(206,145,120,0.15)"></i><i class="a" style="left:17px;top:3px;width:1px;height:1px;background:rgba(206,145,120,0.35)"></i><i class="a" style="left:18px;top:2px;width:1px;height:1px;background:rgba(206,145,120,0.55)"></i><i class="a" style="left:18px;top:3px;width:1px;height:1px;background:rgba(206,145,120,0.45)"></i><i class="a" style="left:19px;top:2px;width:1px;height:1px;background:rgba(206,145,120,0.15)"></i><i class="a" style="left:19px;top:3px;width:1px;height:1px;background:rgba(206,145,120,0.35)"></i><i class="a" style="left:20px;top:2px;width:1px;height:1px;background:rgba(206,145,120,0.55)"></i><i class="a" style="left:20px;top:3px;width:1px;height:1px;background:rgba(206,145,120,0.45)"></i><i class="a" style="left:21px;top:2px;width:1px;height:1px;background:rgba(206,145,120,0.55)"></i><i class="a" style="left:22px;top:2px;width:1px;height:1px;background:rgba(204,204,204,0.15)"></i><i class="a" style="left:22px;top:3px;width:1px;height:1px;background:rgba(204,204,204,0.35)"></i>
<i class="a" style="left:4px;top:4px;width:1px;height:1px;background:rgba(156,220,254,0.55)"></i><i class="a" style="left:5px;top:4px;width:1px;height:1px;background:rgba(156,220,254,0.30)"></i><i class="a" style="left:5px;top:5px;width:1px;height:1px;background:rgba(156,220,254,0.45)"></i><i class="a" style="left:6px;top:4px;width:1px;height:1px;background:rgba(156,220,254,0.30)"></i><i class="a" style="left:6px;top:5px;width:1px;height:1px;background:rgba(156,220,254,0.45)"></i><i class="a" style="left:7px;top:4px;width:1px;height:1px;background:rgba(156,220,254,0.30)"></i><i class="a" style="left:7px;top:5px;width:1px;height:1px;background:rgba(156,220,254,0.45)"></i><i class="a" style="left:8px;top:4px;width:1px;height:1px;background:rgba(156,220,254,0.55)"></i><i class="a" style="left:8px;top:5px;width:1px;height:1px;background:rgba(156,220,254,0.45)"></i><i class="a" style="left:9px;top:4px;width:1px;height:1px;background:rgba(156,220,254,0.30)"></i><i class="a" style="left:9px;top:5px;width:1px;height:1px;background:rgba(156,220,254,0.45)"></i><i class="a" style="left:10px;top:4px;width:1px;height:1px;background:rgba(156,220,254,0.30)"></i><i class="a" style="left:10px;top:5px;width:1px;height:1px;background:rgba(156,220,254,0.45)"></i><i class="a" style="left:11px;top:4px;width:1px;height:1px;background:rgba(156,220,254,0.30)"></i><i class="a" style="left:11px;top:5px;width:1px;height:1px;background:rgba(156,220,254,0.45)"></i><i class="a" style="left:12px;top:4px;width:1px;height:1px;background:rgba(156,220,254,0.30)"></i><i class="a" style="left:12px;top:5px;width:1px;height:1px;background:rgba(156,220,254,0.45)"></i><i class="a" style="left:13px;top:4px;width:1px;height:1px;background:rgba(156,220,254,0.30)"></i><i class="a" style="left:13px;top:5px;width:1px;height:1px;background:rgba(156,220,254,0.45)"></i><i class="a" style="left:14px;top:4px;width:1px;height:1px;background:rgba(156,220,254,0.55)"></i><i class="a" style="left:14px;top:5px;width:1px;height:1px;background:rgba(156,220,254,0.45)"></i><i class="a" style="left:15px;top:4px;width:1px;height:1px;background:rgba(156,220,254,0.30)"></i><i class="a" style="left:15px;top:5px;width:1px;height:1px;background:rgba(156,220,254,0.45)"></i><i class="a" style="left:16px;top:4px;width:1px;height:1px;background:rgba(156,220,254,0.30)"></i><i class="a" style="left:16px;top:5px;width:1px;height:1px;background:rgba(156,220,254,0.45)"></i><i class="a" style="left:17px;top:4px;width:1px;height:1px;background:rgba(156,220,254,0.30)"></i><i class="a" style="left:17px;top:5px;width:1px;height:1px;background:rgba(156,220,254,0.45)"></i><i class="a" style="left:18px;top:4px;width:1px;height:1px;background:rgba(156,220,254,0.30)"></i><i class="a" style="left:18px;top:5px;width:1px;height:1px;background:rgba(156,220,254,0.45)"></i><i class="a" style="left:19px;top:4px;width:1px;height:1px;background:rgba(156,220,254,0.55)"></i><i class="a" style="left:20px;top:4px;width:1px;height:1px;background:rgba(204,204,204,0.25)"></i><i class="a" style="left:20px;top:5px;width:1px;height:1px;background:rgba(204,204,204,0.25)"></i><i class="a" style="left:22px;top:4px;width:1px;height:1px;background:rgba(204,204,204,0.40)"></i><i class="a" style="left:22px;top:5px;width:1px;height:1px;background:rgba(204,204,204,0.40)"></i>
<i class="a" style="left:8px;top:6px;width:1px;height:1px;background:rgba(204,204,204,0.40)"></i><i class="a" style="left:8px;top:7px;width:1px;height:1px;background:rgba(204,204,204,0.40)"></i>
<i class="a" style="left:12px;top:8px;width:1px;height:1px;background:rgba(156,220,254,0.55)"></i><i class="a" style="left:13px;top:8px;width:1px;height:1px;background:rgba(156,220,254,0.30)"></i><i class="a" style="left:13px;top:9px;width:1px;height:1px;background:rgba(156,220,254,0.45)"></i><i class="a" style="left:14px;top:8px;width:1px;height:1px;background:rgba(156,220,254,0.30)"></i><i class="a" style="left:14px;top:9px;width:1px;height:1px;background:rgba(156,220,254,0.45)"></i><i class="a" style="left:15px;top:8px;width:1px;height:1px;background:rgba(156,220,254,0.30)"></i><i class="a" style="left:15px;top:9px;width:1px;height:1px;background:rgba(156,220,254,0.45)"></i><i class="a" style="left:16px;top:8px;width:1px;height:1px;background:rgba(156,220,254,0.30)"></i><i class="a" style="left:16px;top:9px;width:1px;height:1px;background:rgba(156,220,254,0.45)"></i><i class="a" style="left:17px;top:8px;width:1px;height:1px;background:rgba(156,220,254,0.55)"></i><i class="a" style="left:18px;top:8px;width:1px;height:1px;background:rgba(204,204,204,0.25)"></i><i class="a" style="left:18px;top:9px;width:1px;height:1px;background:rgba(204,204,204,0.25)"></i><i class="a" style="left:20px;top:8px;width:1px;height:1px;background:rgba(206,145,120,0.55)"></i><i class="a" style="left:21px;top:8px;width:1px;height:1px;background:rgba(206,145,120,0.55)"></i><i class="a" style="left:21px;top:9px;width:1px;height:1px;background:rgba(206,145,120,0.45)"></i><i class="a" style="left:22px;top:8px;width:1px;height:1px;background:rgba(206,145,120,0.30)"></i><i class="a" style="left:22px;top:9px;width:1px;height:1px;background:rgba(206,145,120,0.45)"></i><i class="a" style="left:23px;top:8px;width:1px;height:1px;background:rgba(206,145,120,0.55)"></i><i class="a" style="left:23px;top:9px;width:1px;height:1px;background:rgba(206,145,120,0.45)"></i><i class="a" style="left:24px;top:8px;width:1px;height:1px;background:rgba(206,145,120,0.55)"></i><i class="a" style="left:24px;top:9px;width:1px;height:1px;background:rgba(206,145,120,0.45)"></i><i class="a" style="left:25px;top:8px;width:1px;height:1px;background:rgba(206,145,120,0.30)"></i><i class="a" style="left:25px;top:9px;width:1px;height:1px;background:rgba(206,145,120,0.45)"></i><i class="a" style="left:26px;top:8px;width:1px;height:1px;background:rgba(206,145,120,0.30)"></i><i class="a" style="left:26px;top:9px;width:1px;height:1px;background:rgba(206,145,120,0.45)"></i><i class="a" style="left:27px;top:8px;width:1px;height:1px;background:rgba(206,145,120,0.25)"></i><i class="a" style="left:27px;top:9px;width:1px;height:1px;background:rgba(206,145,120,0.25)"></i><i class="a" style="left:29px;top:8px;width:1px;height:1px;background:rgba(206,145,120,0.55)"></i><i class="a" style="left:29px;top:9px;width:1px;height:1px;background:rgba(206,145,120,0.45)"></i><i class="a" style="left:30px;top:8px;width:1px;height:1px;background:rgba(206,145,120,0.30)"></i><i class="a" style="left:30px;top:9px;width:1px;height:1px;background:rgba(206,145,120,0.45)"></i><i class="a" style="left:31px;top:8px;width:1px;height:1px;background:rgba(206,145,120,0.30)"></i><i class="a" style="left:31px;top:9px;width:1px;height:1px;background:rgba(206,145,120,0.45)"></i><i class="a" style="left:32px;top:8px;width:1px;height:1px;background:rgba(206,145,120,0.30)"></i><i class="a" style="left:32px;top:9px;width:1px;height:1px;background:rgba(206,145,120,0.45)"></i><i class="a" style="left:33px;top:8px;width:1px;height:1px;background:rgba(206,145,120,0.30)"></i><i class="a" style="left:33px;top:9px;width:1px;height:1px;background:rgba(206,145,120,0.45)"></i><i class="a" style="left:34px;top:8px;width:1px;height:1px;background:rgba(206,145,120,0.30)"></i><i class="a" style="left:34px;top:9px;width:1px;height:1px;background:rgba(206,145,120,0.45)"></i><i class="a" style="left:35px;top:8px;width:1px;height:1px;background:rgba(206,145,120,0.55)"></i><i class="a" style="left:35px;top:9px;width:1px;height:1px;background:rgba(206,145,120,0.45)"></i><i class="a" style="left:37px;top:8px;width:1px;height:1px;background:rgba(206,145,120,0.55)"></i><i class="a" style="left:37px;top:9px;width:1px;height:1px;background:rgba(206,145,120,0.45)"></i><i class="a" style="left:38px;top:8px;width:1px;height:1px;background:rgba(206,145,120,0.30)"></i><i class="a" style="left:38px;top:9px;width:1px;height:1px;background:rgba(206,145,120,0.45)"></i><i class="a" style="left:39px;top:8px;width:1px;height:1px;background:rgba(206,145,120,0.55)"></i><i class="a" style="left:39px;top:9px;width:1px;height:1px;background:rgba(206,145,120,0.45)"></i><i class="a" style="left:40px;top:8px;width:1px;height:1px;background:rgba(206,145,120,0.30)"></i><i class="a" style="left:40px;top:9px;width:1px;height:1px;background:rgba(206,145,120,0.45)"></i><i class="a" style="left:41px;top:8px;width:1px;height:1px;background:rgba(206,145,120,0.55)"></i><i class="a" style="left:42px;top:8px;width:1px;height:1px;background:rgba(204,204,204,0.15)"></i><i class="a" style="left:42px;top:9px;width:1px;height:1px;background:rgba(204,204,204,0.35)"></i>
<i class="a" style="left:12px;top:12px;width:1px;height:1px;background:rgba(156,220,254,0.55)"></i><i class="a" style="left:13px;top:12px;width:1px;height:1px;background:rgba(156,220,254,0.30)"></i><i class="a" style="left:13px;top:13px;width:1px;height:1px;background:rgba(156,220,254,0.45)"></i><i class="a" style="left:14px;top:12px;width:1px;height:1px;background:rgba(156,220,254,0.30)"></i><i class="a" style="left:14px;top:13px;width:1px;height:1px;background:rgba(156,220,254,0.45)"></i><i class="a" style="left:15px;top:12px;width:1px;height:1px;background:rgba(156,220,254,0.30)"></i><i class="a" style="left:15px;top:13px;width:1px;height:1px;background:rgba(156,220,254,0.45)"></i><i class="a" style="left:16px;top:12px;width:1px;height:1px;background:rgba(156,220,254,0.30)"></i><i class="a" style="left:16px;top:13px;width:1px;height:1px;background:rgba(156,220,254,0.45)"></i><i class="a" style="left:17px;top:12px;width:1px;height:1px;background:rgba(156,220,254,0.30)"></i><i class="a" style="left:17px;top:13px;width:1px;height:1px;background:rgba(156,220,254,0.45)"></i><i class="a" style="left:18px;top:12px;width:1px;height:1px;background:rgba(156,220,254,0.30)"></i><i class="a" style="left:18px;top:13px;width:1px;height:1px;background:rgba(156,220,254,0.45)"></i><i class="a" style="left:19px;top:12px;width:1px;height:1px;background:rgba(156,220,254,0.55)"></i><i class="a" style="left:19px;top:13px;width:1px;height:1px;background:rgba(156,220,254,0.45)"></i><i class="a" style="left:20px;top:12px;width:1px;height:1px;background:rgba(156,220,254,0.55)"></i><i class="a" style="left:21px;top:12px;width:1px;height:1px;background:rgba(204,204,204,0.25)"></i><i class="a" style="left:21px;top:13px;width:1px;height:1px;background:rgba(204,204,204,0.25)"></i><i class="a" style="left:23px;top:12px;width:1px;height:1px;background:rgba(206,145,120,0.55)"></i><i class="a" style="left:24px;top:12px;width:1px;height:1px;background:rgba(206,145,120,0.55)"></i><i class="a" style="left:24px;top:13px;width:1px;height:1px;background:rgba(206,145,120,0.45)"></i><i class="a" style="left:25px;top:12px;width:1px;height:1px;background:rgba(206,145,120,0.30)"></i><i class="a" style="left:25px;top:13px;width:1px;height:1px;background:rgba(206,145,120,0.45)"></i><i class="a" style="left:26px;top:12px;width:1px;height:1px;background:rgba(206,145,120,0.30)"></i><i class="a" style="left:26px;top:13px;width:1px;height:1px;background:rgba(206,145,120,0.45)"></i><i class="a" style="left:27px;top:12px;width:1px;height:1px;background:rgba(206,145,120,0.30)"></i><i class="a" style="left:27px;top:13px;width:1px;height:1px;background:rgba(206,145,120,0.45)"></i><i class="a" style="left:28px;top:12px;width:1px;height:1px;background:rgba(206,145,120,0.30)"></i><i class="a" style="left:28px;top:13px;width:1px;height:1px;background:rgba(206,145,120,0.45)"></i><i class="a" style="left:29px;top:12px;width:1px;height:1px;background:rgba(206,145,120,0.55)"></i><i class="a" style="left:29px;top:13px;width:1px;height:1px;background:rgba(206,145,120,0.45)"></i><i class="a" style="left:30px;top:12px;width:1px;height:1px;background:rgba(206,145,120,0.55)"></i><i class="a" style="left:31px;top:12px;width:1px;height:1px;background:rgba(204,204,204,0.15)"></i><i class="a" style="left:31px;top:13px;width:1px;height:1px;background:rgba(204,204,204,0.35)"></i>
<i class="a" style="left:12px;top:14px;width:1px;height:1px;background:rgba(156,220,254,0.55)"></i><i class="a" style="left:13px;top:14px;width:1px;height:1px;background:rgba(156,220,254,0.30)"></i><i class="a" style="left:13px;top:15px;width:1px;height:1px;background:rgba(156,220,254,0.45)"></i><i class="a" style="left:14px;top:14px;width:1px;height:1px;background:rgba(156,220,254,0.30)"></i><i class="a" style="left:14px;top:15px;width:1px;height:1px;background:rgba(156,220,254,0.45)"></i><i class="a" style="left:15px;top:14px;width:1px;height:1px;background:rgba(156,220,254,0.30)"></i><i class="a" style="left:15px;top:15px;width:1px;height:1px;background:rgba(156,220,254,0.45)"></i><i class="a" style="left:16px;top:14px;width:1px;height:1px;background:rgba(156,220,254,0.30)"></i><i class="a" style="left:16px;top:15px;width:1px;height:1px;background:rgba(156,220,254,0.45)"></i><i class="a" style="left:17px;top:14px;width:1px;height:1px;background:rgba(156,220,254,0.30)"></i><i class="a" style="left:17px;top:15px;width:1px;height:1px;background:rgba(156,220,254,0.45)"></i><i class="a" style="left:18px;top:14px;width:1px;height:1px;background:rgba(156,220,254,0.30)"></i><i class="a" style="left:18px;top:15px;width:1px;height:1px;background:rgba(156,220,254,0.45)"></i><i class="a" style="left:19px;top:14px;width:1px;height:1px;background:rgba(156,220,254,0.30)"></i><i class="a" style="left:19px;top:15px;width:1px;height:1px;background:rgba(156,220,254,0.45)"></i><i class="a" style="left:20px;top:14px;width:1px;height:1px;background:rgba(156,220,254,0.55)"></i><i class="a" style="left:21px;top:14px;width:1px;height:1px;background:rgba(204,204,204,0.25)"></i><i class="a" style="left:21px;top:15px;width:1px;height:1px;background:rgba(204,204,204,0.25)"></i><i class="a" style="left:23px;top:14px;width:1px;height:1px;background:rgba(206,145,120,0.55)"></i><i class="a" style="left:24px;top:14px;width:1px;height:1px;background:rgba(206,145,120,0.55)"></i><i class="a" style="left:24px;top:15px;width:1px;height:1px;background:rgba(206,145,120,0.45)"></i><i class="a" style="left:25px;top:14px;width:1px;height:1px;background:rgba(206,145,120,0.40)"></i><i class="a" style="left:25px;top:15px;width:1px;height:1px;background:rgba(206,145,120,0.40)"></i><i class="a" style="left:26px;top:14px;width:1px;height:1px;background:rgba(206,145,120,0.55)"></i><i class="a" style="left:26px;top:15px;width:1px;height:1px;background:rgba(206,145,120,0.45)"></i><i class="a" style="left:27px;top:14px;width:1px;height:1px;background:rgba(206,145,120,0.30)"></i><i class="a" style="left:27px;top:15px;width:1px;height:1px;background:rgba(206,145,120,0.45)"></i><i class="a" style="left:28px;top:14px;width:1px;height:1px;background:rgba(206,145,120,0.55)"></i><i class="a" style="left:28px;top:15px;width:1px;height:1px;background:rgba(206,145,120,0.45)"></i><i class="a" style="left:29px;top:14px;width:1px;height:1px;background:rgba(206,145,120,0.30)"></i><i class="a" style="left:29px;top:15px;width:1px;height:1px;background:rgba(206,145,120,0.45)"></i><i class="a" style="left:30px;top:14px;width:1px;height:1px;background:rgba(206,145,120,0.40)"></i><i class="a" style="left:30px;top:15px;width:1px;height:1px;background:rgba(206,145,120,0.40)"></i><i class="a" style="left:31px;top:14px;width:1px;height:1px;background:rgba(206,145,120,0.55)"></i><i class="a" style="left:32px;top:14px;width:1px;height:1px;background:rgba(204,204,204,0.15)"></i><i class="a" style="left:32px;top:15px;width:1px;height:1px;background:rgba(204,204,204,0.35)"></i>
<i class="a" style="left:12px;top:16px;width:1px;height:1px;background:rgba(156,220,254,0.55)"></i><i class="a" style="left:13px;top:16px;width:1px;height:1px;background:rgba(156,220,254,0.30)"></i><i class="a" style="left:13px;top:17px;width:1px;height:1px;background:rgba(156,220,254,0.45)"></i><i class="a" style="left:14px;top:16px;width:1px;height:1px;background:rgba(156,220,254,0.30)"></i><i class="a" style="left:14px;top:17px;width:1px;height:1px;background:rgba(156,220,254,0.45)"></i><i class="a" style="left:15px;top:16px;width:1px;height:1px;background:rgba(156,220,254,0.30)"></i><i class="a" style="left:15px;top:17px;width:1px;height:1px;background:rgba(156,220,254,0.45)"></i><i class="a" style="left:16px;top:16px;width:1px;height:1px;background:rgba(156,220,254,0.30)"></i><i class="a" style="left:16px;top:17px;width:1px;height:1px;background:rgba(156,220,254,0.45)"></i><i class="a" style="left:17px;top:16px;width:1px;height:1px;background:rgba(156,220,254,0.30)"></i><i class="a" style="left:17px;top:17px;width:1px;height:1px;background:rgba(156,220,254,0.45)"></i><i class="a" style="left:18px;top:16px;width:1px;height:1px;background:rgba(156,220,254,0.55)"></i><i class="a" style="left:18px;top:17px;width:1px;height:1px;background:rgba(156,220,254,0.45)"></i><i class="a" style="left:19px;top:16px;width:1px;height:1px;background:rgba(156,220,254,0.30)"></i><i class="a" style="left:19px;top:17px;width:1px;height:1px;background:rgba(156,220,254,0.45)"></i><i class="a" style="left:20px;top:16px;width:1px;height:1px;background:rgba(156,220,254,0.55)"></i><i class="a" style="left:21px;top:16px;width:1px;height:1px;background:rgba(204,204,204,0.25)"></i><i class="a" style="left:21px;top:17px;width:1px;height:1px;background:rgba(204,204,204,0.25)"></i><i class="a" style="left:23px;top:16px;width:1px;height:1px;background:rgba(206,145,120,0.55)"></i><i class="a" style="left:24px;top:16px;width:1px;height:1px;background:rgba(206,145,120,0.30)"></i><i class="a" style="left:24px;top:17px;width:1px;height:1px;background:rgba(206,145,120,0.45)"></i><i class="a" style="left:25px;top:16px;width:1px;height:1px;background:rgba(206,145,120,0.30)"></i><i class="a" style="left:25px;top:17px;width:1px;height:1px;background:rgba(206,145,120,0.45)"></i><i class="a" style="left:26px;top:16px;width:1px;height:1px;background:rgba(206,145,120,0.55)"></i><i class="a" style="left:26px;top:17px;width:1px;height:1px;background:rgba(206,145,120,0.45)"></i><i class="a" style="left:27px;top:16px;width:1px;height:1px;background:rgba(206,145,120,0.30)"></i><i class="a" style="left:27px;top:17px;width:1px;height:1px;background:rgba(206,145,120,0.45)"></i><i class="a" style="left:28px;top:16px;width:1px;height:1px;background:rgba(206,145,120,0.30)"></i><i class="a" style="left:28px;top:17px;width:1px;height:1px;background:rgba(206,145,120,0.45)"></i><i class="a" style="left:29px;top:16px;width:1px;height:1px;background:rgba(206,145,120,0.30)"></i><i class="a" style="left:29px;top:17px;width:1px;height:1px;background:rgba(206,145,120,0.45)"></i><i class="a" style="left:30px;top:16px;width:1px;height:1px;background:rgba(206,145,120,0.30)"></i><i class="a" style="left:30px;top:17px;width:1px;height:1px;background:rgba(206,145,120,0.45)"></i><i class="a" style="left:31px;top:16px;width:1px;height:1px;background:rgba(206,145,120,0.55)"></i><i class="a" style="left:31px;top:17px;width:1px;height:1px;background:rgba(206,145,120,0.45)"></i><i class="a" style="left:32px;top:16px;width:1px;height:1px;background:rgba(206,145,120,0.30)"></i><i class="a" style="left:32px;top:17px;width:1px;height:1px;background:rgba(206,145,120,0.45)"></i><i class="a" style="left:33px;top:16px;width:1px;height:1px;background:rgba(206,145,120,0.55)"></i><i class="a" style="left:33px;top:17px;width:1px;height:1px;background:rgba(206,145,120,0.45)"></i><i class="a" style="left:34px;top:16px;width:1px;height:1px;background:rgba(206,145,120,0.55)"></i><i class="a" style="left:34px;top:17px;width:1px;height:1px;background:rgba(206,145,120,0.45)"></i><i class="a" style="left:35px;top:16px;width:1px;height:1px;background:rgba(206,145,120,0.30)"></i><i class="a" style="left:35px;top:17px;width:1px;height:1px;background:rgba(206,145,120,0.45)"></i><i class="a" style="left:36px;top:16px;width:1px;height:1px;background:rgba(206,145,120,0.30)"></i><i class="a" style="left:36px;top:17px;width:1px;height:1px;background:rgba(206,145,120,0.45)"></i><i class="a" style="left:37px;top:16px;width:1px;height:1px;background:rgba(206,145,120,0.30)"></i><i class="a" style="left:37px;top:17px;width:1px;height:1px;background:rgba(206,145,120,0.45)"></i><i class="a" style="left:38px;top:16px;width:1px;height:1px;background:rgba(206,145,120,0.30)"></i><i class="a" style="left:38px;top:17px;width:1px;height:1px;background:rgba(206,145,120,0.45)"></i><i class="a" style="left:39px;top:16px;width:1px;height:1px;background:rgba(206,145,120,0.30)"></i><i class="a" style="left:39px;top:17px;width:1px;height:1px;background:rgba(206,145,120,0.45)"></i><i class="a" style="left:40px;top:16px;width:1px;height:1px;background:rgba(206,145,120,0.30)"></i><i class="a" style="left:40px;top:17px;width:1px;height:1px;background:rgba(206,145,120,0.45)"></i><i class="a" style="left:41px;top:16px;width:1px;height:1px;background:rgba(206,145,120,0.55)"></i><i class="a" style="left:41px;top:17px;width:1px;height:1px;background:rgba(206,145,120,0.45)"></i><i class="a" style="left:42px;top:16px;width:1px;height:1px;background:rgba(206,145,120,0.55)"></i><i class="a" style="left:43px;top:16px;width:1px;height:1px;background:rgba(204,204,204,0.15)"></i><i class="a" style="left:43px;top:17px;width:1px;height:1px;background:rgba(204,204,204,0.35)"></i>
<i class="a" style="left:12px;top:18px;width:1px;height:1px;background:rgba(156,220,254,0.55)"></i><i class="a" style="left:13px;top:18px;width:1px;height:1px;background:rgba(156,220,254,0.30)"></i><i class="a" style="left:13px;top:19px;width:1px;height:1px;background:rgba(156,220,254,0.45)"></i><i class="a" style="left:14px;top:18px;width:1px;height:1px;background:rgba(156,220,254,0.30)"></i><i class="a" style="left:14px;top:19px;width:1px;height:1px;background:rgba(156,220,254,0.45)"></i><i class="a" style="left:15px;top:18px;width:1px;height:1px;background:rgba(156,220,254,0.30)"></i><i class="a" style="left:15px;top:19px;width:1px;height:1px;background:rgba(156,220,254,0.45)"></i><i class="a" style="left:16px;top:18px;width:1px;height:1px;background:rgba(156,220,254,0.55)"></i><i class="a" style="left:16px;top:19px;width:1px;height:1px;background:rgba(156,220,254,0.45)"></i><i class="a" style="left:17px;top:18px;width:1px;height:1px;background:rgba(156,220,254,0.55)"></i><i class="a" style="left:17px;top:19px;width:1px;height:1px;background:rgba(156,220,254,0.45)"></i><i class="a" style="left:18px;top:18px;width:1px;height:1px;background:rgba(156,220,254,0.30)"></i><i class="a" style="left:18px;top:19px;width:1px;height:1px;background:rgba(156,220,254,0.45)"></i><i class="a" style="left:19px;top:18px;width:1px;height:1px;background:rgba(156,220,254,0.55)"></i><i class="a" style="left:19px;top:19px;width:1px;height:1px;background:rgba(156,220,254,0.45)"></i><i class="a" style="left:20px;top:18px;width:1px;height:1px;background:rgba(156,220,254,0.30)"></i><i class="a" style="left:20px;top:19px;width:1px;height:1px;background:rgba(156,220,254,0.45)"></i><i class="a" style="left:21px;top:18px;width:1px;height:1px;background:rgba(156,220,254,0.55)"></i><i class="a" style="left:21px;top:19px;width:1px;height:1px;background:rgba(156,220,254,0.45)"></i><i class="a" style="left:22px;top:18px;width:1px;height:1px;background:rgba(156,220,254,0.30)"></i><i class="a" style="left:22px;top:19px;width:1px;height:1px;background:rgba(156,220,254,0.45)"></i><i class="a" style="left:23px;top:18px;width:1px;height:1px;background:rgba(156,220,254,0.55)"></i><i class="a" style="left:24px;top:18px;width:1px;height:1px;background:rgba(204,204,204,0.25)"></i><i class="a" style="left:24px;top:19px;width:1px;height:1px;background:rgba(204,204,204,0.25)"></i><i class="a" style="left:26px;top:18px;width:1px;height:1px;background:rgba(86,156,214,0.55)"></i><i class="a" style="left:26px;top:19px;width:1px;height:1px;background:rgba(86,156,214,0.45)"></i><i class="a" style="left:27px;top:18px;width:1px;height:1px;background:rgba(86,156,214,0.30)"></i><i class="a" style="left:27px;top:19px;width:1px;height:1px;background:rgba(86,156,214,0.45)"></i><i class="a" style="left:28px;top:18px;width:1px;height:1px;background:rgba(86,156,214,0.55)"></i><i class="a" style="left:28px;top:19px;width:1px;height:1px;background:rgba(86,156,214,0.45)"></i><i class="a" style="left:29px;top:18px;width:1px;height:1px;background:rgba(86,156,214,0.30)"></i><i class="a" style="left:29px;top:19px;width:1px;height:1px;background:rgba(86,156,214,0.45)"></i><i class="a" style="left:30px;top:18px;width:1px;height:1px;background:rgba(86,156,214,0.30)"></i><i class="a" style="left:30px;top:19px;width:1px;height:1px;background:rgba(86,156,214,0.45)"></i>
<i class="a" style="left:8px;top:20px;width:1px;height:1px;background:rgba(204,204,204,0.40)"></i><i class="a" style="left:8px;top:21px;width:1px;height:1px;background:rgba(204,204,204,0.40)"></i>
<i class="a" style="left:4px;top:22px;width:1px;height:1px;background:rgba(204,204,204,0.40)"></i><i class="a" style="left:4px;top:23px;width:1px;height:1px;background:rgba(204,204,204,0.40)"></i>
<i class="a" style="left:0px;top:24px;width:1px;height:1px;background:rgba(204,204,204,0.40)"></i><i class="a" style="left:0px;top:25px;width:1px;height:1px;background:rgba(204,204,204,0.40)"></i>
</div>
<div class="a" style="left:886px;top:92px;width:1px;height:686px;background:#101010"></div>
<div class="a" style="left:886px;top:92px;width:14px;height:1px;background:#101010"></div>
<div class="a" style="left:896px;top:163px;width:4px;height:14px;background:#d7b100"></div>
<div class="a" style="left:887px;top:219px;width:13px;height:2px;background:#a0a0a0"></div>
<div class="a" style="left:681px;top:726px;width:134px;height:28px;background:#0078d4;border-radius:3px;box-shadow:0 0 8px rgba(0,0,0,0.6)"></div>
<div class="t" style="left:688px;top:733px;font-size:13.5px;color:#ffffff;letter-spacing:0px">Add Configuration...</div>
<!-- CHAT -->
<div class="a" style="left:900px;top:35px;width:1px;height:743px;background:#2b2b2b"></div>
<div class="a" style="left:901px;top:35px;width:299px;height:743px;background:#181818"></div>
<!-- STATUS BAR -->
<div class="a" style="left:0;top:778px;width:1200px;height:22px;background:#181818;border-top:1px solid #2b2b2b"></div>

<div class="t" style="left:921px;top:48px;font-size:11px;color:#cccccc">CHAT</div>
<div class="a" style="left:919px;top:63px;width:33px;height:1px;background:#0078d4"></div>
<svg style="left:1026px;top:46px" width="15" height="14" viewBox="0 0 15 14"><path d="M7.5 0V13.5M1 6.7H14" stroke="#cccccc" stroke-width="1.1"/></svg>
<svg style="left:1052px;top:45px" width="16" height="16" viewBox="0 0 16 16"><path d="M2.3 5.3A6.6 6.6 0 1 1 1.9 10.2" stroke="#cccccc" stroke-width="1.1" fill="none"/><path d="M1.6 1.8V5.6H5.3" stroke="#cccccc" stroke-width="1.1" fill="none"/><path d="M8.2 4.5V8.5L10.9 11.3" stroke="#cccccc" stroke-width="1.1" fill="none"/></svg>
<svg style="left:1078px;top:45px" width="16" height="16" viewBox="0 0 16 16"><path d="M6.55 3.32 L6.75 1.52 L9.25 1.52 L9.45 3.32 L10.29 3.67 L11.70 2.54 L13.46 4.30 L12.33 5.71 L12.68 6.55 L14.48 6.75 L14.48 9.25 L12.68 9.45 L12.33 10.29 L13.46 11.70 L11.70 13.46 L10.29 12.33 L9.45 12.68 L9.25 14.48 L6.75 14.48 L6.55 12.68 L5.71 12.33 L4.30 13.46 L2.54 11.70 L3.67 10.29 L3.32 9.45 L1.52 9.25 L1.52 6.75 L3.32 6.55 L3.67 5.71 L2.54 4.30 L4.30 2.54 L5.71 3.67Z" stroke="#cccccc" stroke-width="1.1" fill="none" stroke-linejoin="round"/><circle cx="8" cy="8" r="1.6" stroke="#cccccc" stroke-width="1.1" fill="none"/></svg>
<svg style="left:1105px;top:51px" width="14" height="4"><rect x="0.6" y="0.8" width="2.4" height="2.4" rx="1" fill="#cccccc"/><rect x="5.6" y="0.8" width="2.4" height="2.4" rx="1" fill="#cccccc"/><rect x="10.6" y="0.8" width="2.4" height="2.4" rx="1" fill="#cccccc"/></svg>
<div class="a" style="left:1131px;top:45px;width:1px;height:16px;background:#6b6b6b"></div>
<svg style="left:1145px;top:47px" width="13" height="12" viewBox="0 0 13 12"><path d="M0.6 3.8V0.6H3.8M8.4 0.6H11.6V3.8M11.6 8.2V11.4H8.4M3.8 11.4H0.6V8.2" stroke="#cccccc" stroke-width="1.2" fill="none"/></svg>
<svg style="left:1173px;top:49px" width="9" height="9" viewBox="0 0 9 9"><path d="M0.4 0.4L8.4 8.4M8.4 0.4L0.4 8.4" stroke="#cccccc" stroke-width="1.1"/></svg>
<!-- chat big icon -->
<svg style="left:1030px;top:170px" width="44" height="44" viewBox="0 0 44 44"><path d="M17.5 10.3H4.6V32.3H11.2L12 40.3L19.8 32.3H32.2" stroke="#cccccc" stroke-width="2.6" fill="none" stroke-linejoin="round"/><path d="M26.8 3.5Q29.7 9.6 35.8 12.5Q29.7 15.4 26.8 21.5Q23.900000000000002 15.4 17.8 12.5Q23.900000000000002 9.6 26.8 3.5Z" fill="#cccccc"/><path d="M34.3 18.7Q36.4 23.099999999999998 40.8 25.2Q36.4 27.3 34.3 31.7Q32.199999999999996 27.3 27.799999999999997 25.2Q32.199999999999996 23.099999999999998 34.3 18.7Z" fill="#cccccc"/></svg>
<div class="t" style="left:915px;top:228px;font-size:27.5px;color:#cccccc">Build with agent mode</div>
<div class="t" style="left:985px;top:271px;font-size:18px;color:#cccccc;letter-spacing:0.1px">Let's get started</div>
<!-- input -->
<div class="a" style="left:917px;top:350px;width:267px;height:66px;background:#313131;border:1px solid #3c3c3c;border-radius:4px"></div>
<div class="a" style="left:924px;top:360px;width:253px;height:20px;overflow:hidden"><div class="t" style="left:0;top:2px;font-size:14px;color:#989898;letter-spacing:0.15px">Add context (#), extensions (@), commands (/)</div></div>
<svg style="left:1158px;top:390px" width="16" height="15" viewBox="0 0 16 15"><path d="M1.3 1.2L15 7.3L1.3 13.5L3.2 7.3ZM3.2 7.3H15" stroke="#cccccc" stroke-width="1.1" fill="none" stroke-linejoin="round"/></svg>
<!-- buttons -->
<div class="a" style="left:976px;top:440px;width:149px;height:26px;background:#1f1f1f;border:1px solid #3a3a3a;border-radius:4px"></div>
<div class="t" style="left:985px;top:444px;font-size:15px;font-weight:bold;color:#cccccc;letter-spacing:0.6px">Build Workspace</div>
<div class="a" style="left:993px;top:474px;width:115px;height:26px;background:#1f1f1f;border:1px solid #3a3a3a;border-radius:4px"></div>
<div class="t" style="left:1002px;top:478px;font-size:15px;font-weight:bold;color:#cccccc;letter-spacing:0.5px">Show Config</div>
<div class="t" style="left:953px;top:558px;font-size:13px;color:#9d9d9d;letter-spacing:0.2px">AI responses may be inaccurate.</div>

<div class="a" style="left:0;top:779px;width:34px;height:21px;background:#0078d4"></div>
<svg style="left:12px;top:782px" width="11" height="14" viewBox="0 0 11 14"><path d="M1 5.5L4.5 9L1 12.5M9.8 1L6.3 4.5L9.8 8" stroke="#ffffff" stroke-width="1.1" fill="none"/></svg>
<svg style="left:42px;top:782px" width="14" height="14" viewBox="0 0 14 14"><circle cx="6.9" cy="6.9" r="5.9" stroke="#cccccc" stroke-width="1.1" fill="none"/><path d="M4.6 4.6L9.2 9.2M9.2 4.6L4.6 9.2" stroke="#cccccc" stroke-width="1.1"/></svg>
<div class="t" style="left:59px;top:782px;font-size:13px;color:#cccccc">0</div>
<svg style="left:71px;top:782px" width="14" height="13" viewBox="0 0 14 13"><path d="M7 1.2L12.9 11.9H1.1Z" stroke="#cccccc" stroke-width="1.1" fill="none" stroke-linejoin="round"/><path d="M7 4.8V8.3M7 9.4V10.6" stroke="#cccccc" stroke-width="1.2"/></svg>
<div class="t" style="left:89px;top:782px;font-size:13px;color:#cccccc">1</div>
<div class="t" style="left:646px;top:782px;font-size:13px;color:#cccccc">Ln 10, Col 32</div>
<div class="t" style="left:742px;top:782px;font-size:13px;color:#cccccc">Spaces: 4</div>
<div class="t" style="left:816px;top:782px;font-size:13px;color:#cccccc;letter-spacing:-0.4px">UTF-8</div>
<div class="t" style="left:867px;top:782px;font-size:13px;color:#cccccc;letter-spacing:-0.5px">LF</div>
<svg style="left:897px;top:782px" width="14" height="14" viewBox="0 0 14 14"><path d="M3.5 1.5Q2 1.5 2 3V5Q2 6.3 0.9 6.8Q2 7.3 2 8.6V10.5Q2 12 3.5 12M8.8 1.5Q10.3 1.5 10.3 3V5.5" stroke="#cccccc" stroke-width="1.1" fill="none"/><circle cx="8.6" cy="10.4" r="2" stroke="#cccccc" stroke-width="1.1" fill="none"/></svg>
<div class="t" style="left:916px;top:782px;font-size:13px;color:#cccccc">JSON with Comments</div>
<div class="a" style="left:1052px;top:779px;width:111px;height:21px;background:#33363b"></div>
<svg style="left:1061px;top:782px" width="16" height="14" viewBox="0 0 16 14"><path d="M3.3 5.6Q1.2 5.6 1.2 8.2V9.6Q1.2 12.8 8 12.8Q14.8 12.8 14.8 9.6V8.2Q14.8 5.6 12.7 5.6" stroke="#cccccc" stroke-width="1.2" fill="none"/><path d="M3.5 1.5H6.8Q7.6 1.5 7.6 2.8V5.2Q7.6 6.3 6 6.3H4.3Q2.8 6.3 2.8 5V2.5Q2.8 1.5 3.5 1.5ZM9.2 1.5H12.5Q13.2 1.5 13.2 2.5V5Q13.2 6.3 11.7 6.3H10Q8.4 6.3 8.4 5.2V2.8Q8.4 1.5 9.2 1.5Z" stroke="#cccccc" stroke-width="1.1" fill="none"/><path d="M6 8.5V10.5M10 8.5V10.5" stroke="#cccccc" stroke-width="1.3"/></svg>
<div class="t" style="left:1081px;top:782px;font-size:13px;color:#cccccc">Finish Setup</div>
<svg style="left:1172px;top:782px" width="14" height="14" viewBox="0 0 14 14"><path d="M8 2.5Q7.3 2 6.2 2Q2.8 2 2.8 5.8V9.2L1.2 11H11.3L9.7 9.2V7.2" stroke="#cccccc" stroke-width="1.1" fill="none" stroke-linejoin="round"/><path d="M4.6 11.5Q5 13.2 6.3 13.2Q7.6 13.2 8 11.5" stroke="#cccccc" stroke-width="1.1" fill="none"/><circle cx="10.3" cy="3.3" r="2.4" fill="#cccccc"/></svg>
</body></html>
